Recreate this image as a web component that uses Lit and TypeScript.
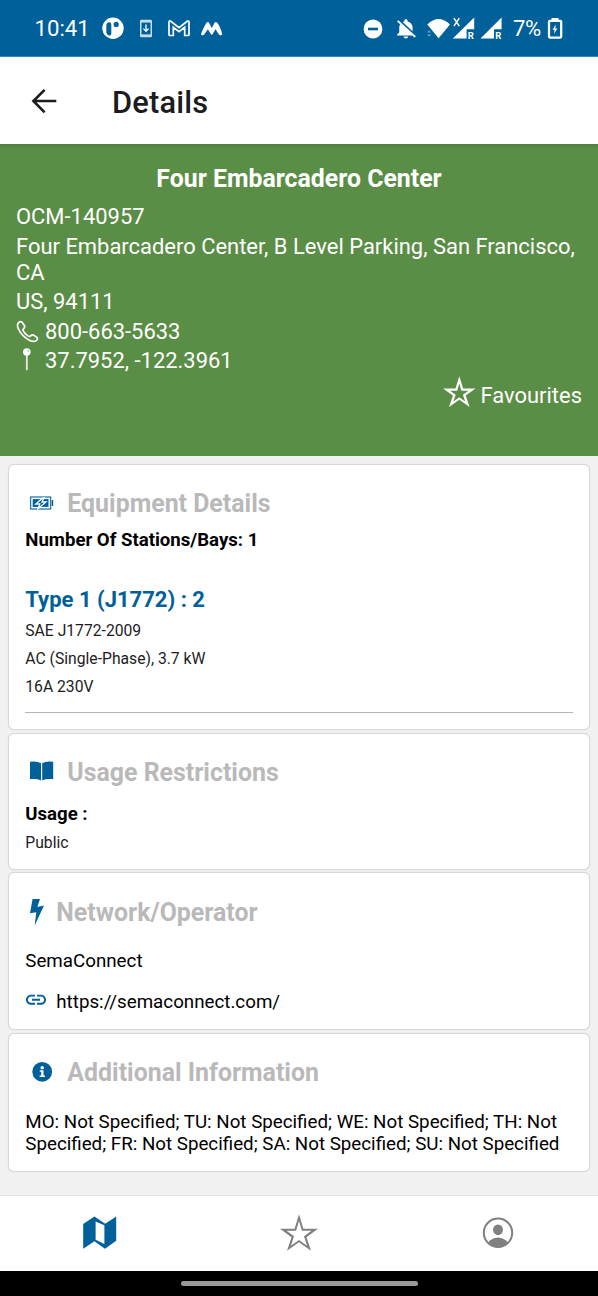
import { LitElement, html, svg, css } from "lit";
import { customElement, property } from "lit/decorators.js";

const starOuter =
  "M460 375.2L463.8 387.5H476.3L466.4 394.5L470.3 406L460 398.8L449.7 406L453.6 394.5L443.7 387.5H456.2Z";
const starBold =
  starOuter + "M460 382.6L457.9 389.8H450.8L456.4 393.8L454.1 400.6L460 396.2L465.9 400.6L463.6 393.8L469.2 389.8H462.1Z";
const starThin =
  starOuter + "M460 380.9L457.5 389.2H449.3L455.7 393.7L453.1 401.8L460 396.9L466.9 401.8L464.3 393.7L470.7 389.2H462.5Z";

@customElement("status-bar")
export class StatusBar extends LitElement {
  static styles = css`
    :host {
      display: flex;
      height: 57px;
      box-sizing: border-box;
      padding: 0 35px 0 34.5px;
      align-items: center;
      background: #006099;
      border-bottom: 1px solid #3a84b1;
      color: #fff;
      font-size: 22.2px;
      line-height: 56px;
    }
    svg { display: block; flex: none; }
    .time { width: 65.5px; }
    .spacer { flex: 1; }
    .level { width: 33px; letter-spacing: -0.5px; }
    .tag { font: 700 9.5px Roboto, sans-serif; }
  `;
  render() {
    return html`
      <span class="time">10:41</span>
      <svg width="125" height="56" viewBox="100 0 125 56" fill="#fff">
        <circle cx="113" cy="28.3" r="10.7" />
        <path fill="#006099" d="M106.3 26q0-3.8 3-3.8q2 0 2 2.2v9q0 2.2-2 2.2q-1.8 0-3-3z" />
        <circle cx="116.2" cy="24.4" r="2.6" fill="#006099" />
        <rect x="140" y="19.8" width="12" height="17.5" rx="1.4" fill="#c7dcea" />
        <rect x="141.5" y="22.6" width="9" height="11.8" fill="#006099" />
        <path d="M146 24.5v6M143.4 28.6l2.6 2.7l2.6-2.7" fill="none" stroke="#fff" stroke-width="1.3" />
        <path d="M169 22.3q0-2 1.8-1l8.2 6.3l8.2-6.3q1.8-1 1.8 1v12.4q0 .8-.8.8h-3.5v-8.2l-5.7 4.4l-5.7-4.4v8.2h-3.5q-.8 0-.8-.8z" fill="none" stroke="#fff" stroke-width="1.7" />
        <path d="M200.9 34.6C203 29 205 25 206.7 22.6Q207.9 21.3 209 22.8L211.8 28L214.6 22.8Q215.8 21.3 217 22.6C219 25 221 29 222.3 34.6Q220.6 36 218.9 34.4L215.5 29.3L212.5 34.3Q211.7 35.4 210.9 34.3L207.9 29.3L204.2 34.4Q202.5 36 200.9 34.6z" />
      </svg>
      <span class="spacer"></span>
      <svg width="153" height="56" viewBox="360 0 153 56" fill="#fff">
        <circle cx="373" cy="29" r="9.4" />
        <rect x="368" y="27.7" width="10" height="2.6" fill="#006099" />
        <g transform="translate(392.6 16.9) scale(1.11 .98)">
          <path d="M20 18.69L7.84 6.14 5.27 3.49 4 4.76l2.8 2.8v.01c-.52.99-.8 2.16-.8 3.42v5l-2 2v1h13.73l2 2L21 19.72l-1-1.03zM12 22c1.11 0 2-.89 2-2h-4c0 1.11.89 2 2 2zm6-7.32V11c0-3.08-1.64-5.64-4.5-6.32V4c0-.83-.67-1.5-1.5-1.5s-1.5.67-1.5 1.5v.68c-.38.09-.99.33-1.42.56L18 14.68z" />
        </g>
        <path d="M427.3 24.5Q438.6 13.4 450 24.5L438.6 38.3z" />
        <path d="M427 32.5l2.2-2.3l2.2 2.3zM427 34.5l2.2 2.3l2.2-2.3z" opacity=".4" />
        <path d="M452.8 38.6L474.2 17.6V29.2H466.6V38.6z" />
        <path d="M480.5 38.6L501.6 17.6V29.2H494V38.6z" />
        <text class="tag" x="467.8" y="38.5">R</text>
        <text class="tag" x="495.2" y="38.5">R</text>
        <path d="M453.9 18.2l5.4 7.9M459.3 18.2l-5.4 7.9" stroke="#fff" stroke-width="1.5" />
      </svg>
      <span class="level">7%</span>
      <svg width="17" height="56" viewBox="546 0 17 56">
        <path d="M551.5 18h7v2.5h-7z" fill="#fff" />
        <rect x="549" y="20.8" width="12.2" height="16.8" rx="1" fill="none" stroke="#fff" stroke-width="2.3" />
        <path d="M555.8 24.6l-3.2 5.1h2l-.6 4l3.4-5.3h-2.1z" fill="#fff" />
      </svg>
    `;
  }
}

@customElement("info-card")
export class InfoCard extends LitElement {
  @property() heading = "";
  static styles = css`
    :host {
      display: block;
      box-sizing: border-box;
      border: 1px solid #d8d8d8;
      box-shadow: 0 0 1px #d0d0d0;
      border-radius: 6px;
      background: #fff;
      padding: 25.4px 15.7px 0 16px;
    }
    .head {
      display: flex;
      height: 28px;
      align-items: center;
      color: #b9b9b9;
      font-size: 24.9px;
      font-weight: 700;
      line-height: 28px;
      white-space: nowrap;
      margin-bottom: 0.6px;
    }
  `;
  render() {
    return html`
      <div class="head"><slot name="icon"></slot><span>${this.heading}</span></div>
      <slot></slot>
    `;
  }
}

@customElement("app-root")
export class AppRoot extends LitElement {
  static styles = css`
    :host {
      display: flex;
      flex-direction: column;
      width: 598px;
      height: 1296px;
      overflow: hidden;
      background: #f1f1f1;
      font-family: Roboto, sans-serif;
      color: #000;
    }
    svg { display: block; flex: none; }
    .header {
      display: flex;
      height: 87px;
      box-sizing: border-box;
      padding-left: 24px;
      align-items: center;
      background: #fff;
      color: #1c1c1e;
      font-size: 30.8px;
      font-weight: 500;
      line-height: 36px;
      flex: none;
    }
    .header span { padding-top: 4px; margin-left: 48px; letter-spacing: 0.2px; }
    .hero {
      height: 311.6px;
      flex: none;
      box-sizing: border-box;
      padding: 20.6px 16px 0;
      color: #fff;
      background: linear-gradient(#517f3e, #5a8d45 4px);
      font-size: 21.95px;
      line-height: 26px;
    }
    .title {
      text-align: center;
      font-size: 24.85px;
      font-weight: 700;
      line-height: 28px;
      margin-bottom: 11.6px;
    }
    .line { margin-bottom: 3.5px; }
    .row { display: flex; align-items: center; }
    .fav { display: flex; justify-content: flex-end; align-items: center; margin-top: 8.7px; height: 26px; }
    .cards {
      display: flex;
      flex-direction: column;
      flex: 1;
      gap: 2.6px;
      padding: 8px 8.2px 0 8.3px;
      min-height: 0;
    }
    .equipment { height: 266.4px; }
    .usage { height: 137px; }
    .network { height: 158px; }
    .additional { height: 139px; }
    .strong { font-size: 18.6px; font-weight: 700; line-height: 22px; }
    .count { margin-top: 11px; }
    .plug { margin-top: 35.6px; margin-bottom: 8.5px; font-size: 22px; font-weight: 700; line-height: 26px; color: #006099; }
    .small { font-size: 15.7px; line-height: 20px; margin-bottom: 7.8px; color: #1c1c1e; }
    .rule { margin-top: 15px; height: 1.5px; background: #b4b4b4; }
    .usage-label { margin-top: 15.6px; margin-bottom: 8.5px; }
    .body { font-size: 18.75px; line-height: 22px; }
    .operator { margin-top: 23px; margin-bottom: 19px; }
    .hours { margin-top: 23.6px; white-space: nowrap; }
    .tabs {
      display: flex;
      flex: none;
      height: 76.5px;
      box-sizing: border-box;
      border-top: 1px solid #e2e2e2;
      background: #fff;
    }
    .tab { flex: 1; display: flex; justify-content: center; align-items: center; }
    .tab .star { margin-bottom: 2px; }
    .gesture { flex: none; height: 25px; background: #000; display: flex; justify-content: center; align-items: center; }
    .pill { width: 237px; height: 5px; border-radius: 3px; background: #999; }
  `;

  render() {
    return html`
      <status-bar></status-bar>
      <div class="header">
        <svg width="40" height="40" viewBox="24 80.5 40 40" fill="none" stroke="#1c1c1e" stroke-width="2.6">
          <path d="M56.3 100.5H34M44.6 89.3L33.4 100.5L44.6 111.8" />
        </svg>
        <span>Details</span>
      </div>
      <div class="hero">
        <div class="title">Four Embarcadero Center</div>
        <div class="line">OCM-140957</div>
        <div class="line">Four Embarcadero Center, B Level Parking, San Francisco, CA</div>
        <div class="line">US, 94111</div>
        <div class="line row">
          <svg width="29" height="26" viewBox="16 317.5 29 26" fill="none" stroke="#fff" stroke-width="1.7">
            <path d="M18.6 321.2C20 319.8 21.4 319.8 22.3 321L24.3 324C25 325.2 24.8 326.2 23.6 327.2C22.6 328.2 22.8 328.8 23.6 330C24.8 331.8 26.2 333.2 28 334.4C29.2 335.2 29.8 335.3 30.6 334.4C31.6 333.2 32.6 333 33.8 333.8L36.6 335.6C37.8 336.5 37.8 337.6 36.6 338.8C34.8 340.4 32.6 340.2 30 339C25 336.6 20.4 332 18.2 327C17.2 324.6 17.2 322.6 18.6 321.2Z" />
          </svg>
          <span>800-663-5633</span>
        </div>
        <div class="line row">
          <svg width="29" height="26" viewBox="16 347.8 29 26">
            <rect x="25.9" y="354" width="1.9" height="16" fill="#dfe8da" />
            <circle cx="26.8" cy="351.8" r="3.8" fill="#fff" />
            <circle cx="28.2" cy="350.8" r=".8" fill="#8bae7c" />
          </svg>
          <span>37.7952, -122.3961</span>
        </div>
        <div class="fav">
          <svg width="37" height="36" viewBox="443.7 377 37 36" overflow="visible"><path fill="#fff" fill-rule="evenodd" d=${starBold} /></svg>
          <span>Favourites</span>
        </div>
      </div>
      <div class="cards">
        <info-card class="equipment" heading="Equipment Details">
          <svg slot="icon" width="42" height="28" viewBox="25 490 42 28" fill="#006099">
            <rect x="30.6" y="497" width="20" height="12" fill="#fff" stroke="#2a79a9" stroke-width="1.3" />
            <rect x="51.6" y="500" width="1.6" height="6" rx=".5" />
            <rect x="32.7" y="499.1" width="15.8" height="7.8" />
            <path d="M43 497.8L35.8 504H39.8L38.2 508.4L46 502H42L43.8 497.8z" stroke="#fff" stroke-width="1.3" />
          </svg>
          <div class="strong count">Number Of Stations/Bays: 1</div>
          <div class="plug">Type 1 (J1772) : 2</div>
          <div class="small">SAE J1772-2009</div>
          <div class="small">AC (Single-Phase), 3.7 kW</div>
          <div class="small">16A 230V</div>
          <div class="rule"></div>
        </info-card>
        <info-card class="usage" heading="Usage Restrictions">
          <svg slot="icon" width="42" height="28" viewBox="25 758.9 42 28" fill="#006099">
            <path d="M30 761.7Q37.5 760.8 41 763.2V780.3Q37.5 778.4 30 779zM53.2 761.7Q45.7 760.8 42.2 763.2V780.3Q45.7 778.4 53.2 779z" />
          </svg>
          <div class="strong usage-label">Usage :</div>
          <div class="small">Public</div>
        </info-card>
        <info-card class="network" heading="Network/Operator">
          <svg slot="icon" width="31" height="28" viewBox="25 898.4 31 28" fill="#006099">
            <path d="M32.6 898.3H40L37.4 906.3L44 905L34.7 924.8L36.3 911.6L30 912.6z" />
          </svg>
          <div class="body operator">SemaConnect</div>
          <div class="body row">
            <svg width="31" height="22" viewBox="25 991.5 31 22" overflow="visible">
              <path transform="translate(24 988.2)" fill="#006099" d="M3.9 12c0-1.71 1.39-3.1 3.1-3.1h4V7H7c-2.76 0-5 2.24-5 5s2.24 5 5 5h4v-1.9H7c-1.71 0-3.1-1.39-3.1-3.1zM8 13h8v-2H8v2zm9-6h-4v1.9h4c1.71 0 3.1 1.39 3.1 3.1s-1.39 3.1-3.1 3.1h-4V17h4c2.76 0 5-2.24 5-5s-2.24-5-5-5z" />
            </svg>
            <span>https://semaconnect.com/</span>
          </div>
        </info-card>
        <info-card class="additional" heading="Additional Information">
          <svg slot="icon" width="42" height="28" viewBox="25 1059.2 42 28">
            <circle cx="42.2" cy="1072" r="9.9" fill="#006099" />
            <circle cx="42.2" cy="1068" r="1.7" fill="#fff" />
            <path d="M39.8 1070.4H43.5V1075.6H45V1077.2H39.6V1075.6H41.2V1072H39.8z" fill="#fff" />
          </svg>
          <div class="body hours">MO: Not Specified; TU: Not Specified; WE: Not Specified; TH: Not<br />Specified; FR: Not Specified; SA: Not Specified; SU: Not Specified</div>
        </info-card>
      </div>
      <div class="tabs">
        <div class="tab">
          <svg width="36" height="40" viewBox="82 1213.2 36 40" fill="#006099" fill-rule="evenodd">
            <path d="M83.2 1224.3L94.4 1216.8L105.2 1223.9L116.2 1216.6V1241L105 1249L94.4 1241.5L83.2 1249zM95.6 1221.6V1240L104.4 1244.2V1225.4z" />
          </svg>
        </div>
        <div class="tab">
          <svg class="star" width="38" height="37" viewBox="443.7 375 32.6 31.2" preserveAspectRatio="none"><path fill="#808080" fill-rule="evenodd" d=${starThin} /></svg>
        </div>
        <div class="tab">
          <svg width="32" height="40" viewBox="482 1213.2 32 40">
            ${svg`<clipPath id="disc"><circle cx="498" cy="1233" r="14.5" /></clipPath>`}
            <circle cx="498" cy="1233" r="14.2" fill="none" stroke="#808080" stroke-width="2" />
            <ellipse cx="498" cy="1230" rx="5" ry="5.4" fill="#808080" />
            <ellipse cx="498" cy="1247" rx="11" ry="9.2" fill="#808080" clip-path="url(#disc)" />
          </svg>
        </div>
      </div>
      <div class="gesture"><div class="pill"></div></div>
    `;
  }
}
